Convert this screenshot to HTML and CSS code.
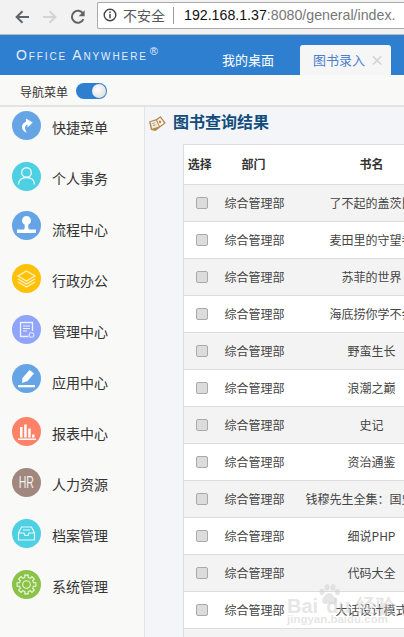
FILE: index.html
```html
<!DOCTYPE html>
<html lang="zh">
<head>
<meta charset="utf-8">
<title>Office Anywhere</title>
<link rel="stylesheet" href="styles.css">
</head>
<body>
<div class="browser">
  <svg class="nav-icon back" viewBox="0 0 16 16"><path d="M15 8H3M8.500 2.200 2.600 8l5.900 5.800" fill="none" stroke="#5f6368" stroke-width="2"/></svg>
  <svg class="nav-icon forward" viewBox="0 0 16 16"><path d="M1 8H13M7.500 2.200 13.400 8l-5.900 5.800" fill="none" stroke="#d4d4d4" stroke-width="2"/></svg>
  <svg class="nav-icon reload" viewBox="0 0 16 16"><path d="M13.400 10.200A6 6 0 1 1 13 4.600" fill="none" stroke="#5f6368" stroke-width="2"/><path d="M14.600 1.200v6h-6z" fill="#5f6368"/></svg>
  <div class="address">
    <svg class="info" viewBox="0 0 14 14"><circle cx="7" cy="7" r="5.800" fill="none" stroke="#444" stroke-width="1.400"/><path d="M7 6v4.200M7 3.500v1.400" stroke="#444" stroke-width="1.500"/></svg>
    <span class="insecure">不安全</span>
    <span class="sep"></span>
    <span class="url"><b>192.168.1.37</b>:8080/general/index.</span>
  </div>
</div>
<header class="topbar">
  <div class="brand">Office Anywhere<sup>®</sup></div>
  <div class="tab">我的桌面</div>
  <div class="tab active">图书录入<span class="close">×</span></div>
</header>
<div class="toolbar">
  <span>导航菜单</span>
  <span class="switch"><span class="knob"></span></span>
</div>
<div class="body">
  <nav class="sidebar">
    <div class="item"><span class="ic c-blue"><svg viewBox="0 0 29 29"><path d="M14 7.500 20.800 11.500 15.500 16.500V13.500C13 14.200 12 17 14.800 21.800 10 20.300 7.200 14 14 10.800z" fill="#fff"/></svg></span>快捷菜单</div>
    <div class="item"><span class="ic c-cyan"><svg viewBox="0 0 29 29"><circle cx="14.500" cy="10.500" r="4.800" fill="none" stroke="#e6f8fb" stroke-width="1.400"/><path d="M6.500 22.500c0-4.500 3.500-7 8-7s8 2.500 8 7" fill="none" stroke="#e6f8fb" stroke-width="1.400"/></svg></span>个人事务</div>
    <div class="item"><span class="ic c-blue up3"><svg viewBox="0 0 29 29"><path d="M14.500 5a4.500 4.500 0 0 1 2 8.500c-.400 1.500-.300 3 .300 5h7.200V22H5v-3.500h7.200c.600-2 .700-3.500.300-5a4.500 4.500 0 0 1 2-8.500z" fill="#fff"/></svg></span>流程中心</div>
    <div class="item"><span class="ic c-yellow"><svg viewBox="0 0 29 29"><path d="M14.500 7 23 12l-8.500 5L6 12z" fill="none" stroke="#fff3c8" stroke-width="1.300"/><path d="m6 15 8.500 5 8.500-5M6 18l8.500 5 8.500-5" fill="none" stroke="#fff3c8" stroke-width="1.300"/></svg></span>行政办公</div>
    <div class="item"><span class="ic c-violet"><svg viewBox="0 0 29 29"><path d="M20.500 16V7.500H8.500v14h8" fill="none" stroke="#eef0ff" stroke-width="1.300"/><path d="M11 11h7M11 13.500h7M11 16h4" stroke="#eef0ff" stroke-width="1.200"/><circle cx="19.500" cy="20" r="2.300" fill="none" stroke="#d5dbff" stroke-width="1.300"/></svg></span>管理中心</div>
    <div class="item"><span class="ic c-blue up3"><svg viewBox="0 0 29 29"><path d="m17.500 6 4.500 3.500-6.500 7.500-5.500 2 .5-5z" fill="#fff"/><path d="M6 21h17v2.300H6z" fill="#fff"/></svg></span>应用中心</div>
    <div class="item"><span class="ic c-coral"><svg viewBox="0 0 29 29"><path d="M8 10h2.500v10.500H8zM12.200 7.500h2.500v13h-2.500zM16.200 11.500h2.500v9h-2.500zM20 17.500h2.500v3H20zM6 21.500h18V23H6z" fill="#fff"/></svg></span>报表中心</div>
    <div class="item"><span class="ic c-brown"><span class="hr">HR</span></span>人力资源</div>
    <div class="item"><span class="ic c-cyan"><svg viewBox="0 0 29 29"><path d="M9.500 8h10l3 6v7H6.500v-7zM6.500 14h5.500l1 2.500h3l1-2.500h5.500M11 11h7" fill="none" stroke="#e6f8fb" stroke-width="1.200"/></svg></span>档案管理</div>
    <div class="item"><span class="ic c-green"><svg viewBox="0 0 29 29"><g transform="translate(14.500 14.500)" fill="none" stroke="#eef8dc" stroke-width="1.100"><circle r="3.800"/><polygon points="-1.700,-7 -1.700,-9.400 1.700,-9.400 1.700,-7 3.750,-6.150 5.440,-7.850 7.850,-5.440 6.150,-3.750 7,-1.700 9.400,-1.700 9.400,1.700 7,1.700 6.150,3.750 7.850,5.440 5.440,7.850 3.750,6.150 1.700,7 1.700,9.400 -1.700,9.400 -1.700,7 -3.750,6.150 -5.440,7.850 -7.850,5.440 -6.150,3.750 -7,1.700 -9.400,1.700 -9.400,-1.700 -7,-1.700 -6.150,-3.750 -7.850,-5.440 -5.440,-7.850 -3.750,-6.150"/></g></svg></span>系统管理</div>
  </nav>
  <main class="main">
    <h1 class="title">
      <svg class="book" viewBox="0 0 18 17"><path d="M1 6.500 8.500 4 12.500 1 17.800 8 7.500 16 3 15z" fill="#b08a4a"/><path d="M2.500 7 8 5.500 11 11.500 4.200 13.800z" fill="#f3e9d6"/><path d="M9.200 5.200 12.200 2.800 16 8 11.800 11z" fill="#fdf9f2"/><path d="M11.800 5.200 13.300 6.800 12.300 8.500 10.800 7z" fill="#d8524a"/><path d="M4.500 8.500l2-.5M5 10.500l2.500-.7" stroke="#9a9a9a" stroke-width="1"/></svg>
      图书查询结果
    </h1>
    <div class="table-wrap">
      <table class="books">
        <colgroup><col class="c1"><col class="c2"><col class="c3"><col class="c4"></colgroup>
        <thead><tr><th>选择</th><th>部门</th><th>书名</th><th></th></tr></thead>
        <tbody>
          <tr><td><span class="check"></span></td><td>综合管理部</td><td>了不起的盖茨比</td><td></td></tr>
          <tr><td><span class="check"></span></td><td>综合管理部</td><td>麦田里的守望者</td><td></td></tr>
          <tr><td><span class="check"></span></td><td>综合管理部</td><td>苏菲的世界</td><td></td></tr>
          <tr><td><span class="check"></span></td><td>综合管理部</td><td>海底捞你学不会</td><td></td></tr>
          <tr><td><span class="check"></span></td><td>综合管理部</td><td>野蛮生长</td><td></td></tr>
          <tr><td><span class="check"></span></td><td>综合管理部</td><td>浪潮之巅</td><td></td></tr>
          <tr><td><span class="check"></span></td><td>综合管理部</td><td>史记</td><td></td></tr>
          <tr><td><span class="check"></span></td><td>综合管理部</td><td>资治通鉴</td><td></td></tr>
          <tr><td><span class="check"></span></td><td>综合管理部</td><td>钱穆先生全集：国史大纲</td><td></td></tr>
          <tr><td><span class="check"></span></td><td>综合管理部</td><td>细说PHP</td><td></td></tr>
          <tr><td><span class="check"></span></td><td>综合管理部</td><td>代码大全</td><td></td></tr>
          <tr><td><span class="check"></span></td><td>综合管理部</td><td>大话设计模式</td><td></td></tr>
          <tr><td></td><td></td><td></td><td></td></tr>
        </tbody>
      </table>
    </div>
  </main>
</div>
<div class="watermark">
  <svg class="paw" viewBox="0 0 24 22"><ellipse cx="5" cy="8" rx="2.500" ry="3.200"/><ellipse cx="10" cy="3.500" rx="2.500" ry="3.200"/><ellipse cx="16" cy="3.500" rx="2.500" ry="3.200"/><ellipse cx="20.500" cy="8" rx="2.500" ry="3.200"/><path d="M12.500 9c3 0 3.500 3 6 5s1 6-2 6-2.500-1-4-1-2 1-4.500 1-4-3.500-2-6 3.500-5 6.500-5z"/></svg>
  <div class="wm-main">Bai<span class="wm-gap"></span>du 经验</div>
  <div class="wm-sub">jingyan.baidu.com</div>
</div>
</body>
</html>
```

FILE: styles.css
```css
* { box-sizing: border-box; }
html, body { margin: 0; height: 100%; }
body {
  width: 404px;
  height: 637px;
  overflow: hidden;
  position: relative;
  display: flex;
  flex-direction: column;
  font-family: "Noto Sans CJK SC", "Liberation Sans", sans-serif;
  color: #333;
  background: #f9f9f7;
}

/* browser chrome */
.browser {
  flex: 0 0 35px;
  display: flex;
  align-items: center;
  background: #f2f2f2;
  border-bottom: 1px solid #b8b8b8;
  padding-left: 14px;
}
.nav-icon { width: 16px; height: 16px; flex: none; margin-top: -1px; }
.forward { margin-left: 12px; }
.reload { margin-left: 12px; }
.address {
  margin-left: 11px;
  flex: 1;
  height: 27px;
  margin-top: -4px;
  margin-right: -4px;
  display: flex;
  align-items: center;
  background: #fff;
  border: 1px solid #a9a9a9;
  border-right: 0;
  border-radius: 2px 0 0 2px;
  padding-left: 5px;
  white-space: nowrap;
  overflow: hidden;
}
.info { width: 14px; height: 14px; flex: none; }
.insecure { margin-left: 6px; font-size: 14px; color: #555; }
.sep { width: 1px; height: 17px; background: #999; margin: 0 10px 0 8px; flex: none; }
.url { font-family: "Liberation Sans", sans-serif; font-size: 14.200px; color: #777; }
.url b { font-weight: 400; color: #111; }

/* app header */
.topbar {
  flex: 0 0 40px;
  display: flex;
  align-items: flex-end;
  background: #2f7fd0;
  color: #fff;
  position: relative;
}
.brand {
  width: 222px;
  align-self: flex-start;
  padding: 12px 0 0 16px;
  font-family: "Liberation Sans", sans-serif;
  font-variant: small-caps;
  font-size: 14px;
  letter-spacing: 1.900px;
  color: #e4eefa;
  white-space: nowrap;
}
.brand sup { font-size: 11px; line-height: 0; vertical-align: 5px; margin-left: 2px; }
.tab {
  height: 30px;
  font-size: 13px;
  line-height: 30px;
}
.tab.active {
  margin-left: 26px;
  width: 91px;
  padding-left: 13px;
  background: #f6f6f6;
  color: #4c80cf;
  border-radius: 3px 3px 0 0;
  position: relative;
}
.close { position: absolute; right: 7px; top: 0; color: #d4d4d4; font-size: 14px; font-weight: 700; line-height: 28px; }

/* toolbar */
.toolbar {
  flex: 0 0 32px;
  display: flex;
  align-items: center;
  padding-top: 2px;
  padding-left: 20px;
  font-size: 12px;
  background: #f9f9f7;
  border-bottom: 2px solid #e3e3e3;
}
.switch {
  margin-left: 8px;
  width: 31px;
  height: 16px;
  border-radius: 8px;
  background: #2f7fd0;
  display: flex;
  justify-content: flex-end;
  align-items: center;
  padding-right: 1px;
}
.knob {
  width: 14px;
  height: 14px;
  border-radius: 50%;
  background: radial-gradient(circle at 40% 40%, #fff, #d5d5d5);
}

/* layout */
.body { flex: 1; display: flex; min-height: 0; }
.sidebar {
  flex: 0 0 145px;
  background: #f9f9f7;
  border-right: 1px solid #e3e3e3;
}
.item {
  height: 51px;
  display: flex;
  align-items: center;
  padding: 0 0 12px 12px;
  font-size: 14px;
  color: #333;
}
.ic {
  flex: none;
  width: 29px;
  height: 29px;
  border-radius: 50%;
  margin: 0 11px 2px 0;
  display: flex;
  align-items: center;
  justify-content: center;
}
.ic svg { width: 29px; height: 29px; display: block; }
.ic.up3 { margin-bottom: 6px; }
.c-blue { background: #65a5e6; }
.c-cyan { background: #4dd0e1; }
.c-yellow { background: #ffc107; }
.c-violet { background: #90a4fb; }
.c-coral { background: #ff8268; }
.c-brown { background: #a1887f; }
.c-green { background: #8bc34a; }
.hr {
  display: inline-block;
  color: #f6f0ed;
  font-family: "Liberation Sans", sans-serif;
  font-size: 17px;
  transform: scaleX(.62);
}

/* main */
.main { flex: 1; min-width: 0; background: #f3f5f8; overflow: hidden; }
.title {
  margin: 0;
  height: 37px;
  padding: 0 0 10px 3px;
  display: flex;
  align-items: center;
  gap: 7px;
  font-size: 16px;
  font-weight: 700;
  color: #124d7e;
  white-space: nowrap;
}
.book { width: 18px; height: 17px; flex: none; margin-top: 5px; }
.table-wrap { margin-left: 38px; overflow: hidden; }
.books {
  table-layout: fixed;
  width: 320px;
  border-collapse: collapse;
  background: #fff;
  font-size: 12px;
  color: #444;
  border-top: 1px solid #ddd;
  border-left: 1px solid #ddd;
}
.c1 { width: 34px; }
.c2 { width: 72px; }
.c3 { width: 164px; }
.c4 { width: 50px; }
.books th {
  height: 40px;
  font-weight: 700;
  font-size: 12px;
  color: #333;
  padding: 0 0 2px;
  text-align: center;
  border-bottom: 1px solid #ddd;
}
.books th:first-child { padding-right: 2px; }
.books td {
  height: 37px;
  padding: 0 0 1px;
  text-align: center;
  white-space: nowrap;
  border-bottom: 1px solid #ddd;
}
.books td:nth-child(2) { padding-left: 2px; }
.books tbody tr:nth-child(odd) { background: #f3f3f3; }
.check {
  display: block;
  width: 12px;
  height: 12px;
  margin: 1px 0 0 12px;
  border-radius: 2px;
  background: #dcdcdc;
  border: 1px solid #aaa;
}

/* watermark */
.watermark {
  position: absolute;
  left: 287px;
  top: 584px;
  width: 95px;
  height: 53px;
  color: rgba(205, 205, 205, .5);
  pointer-events: none;
  white-space: nowrap;
}
.paw { position: absolute; left: 30px; top: 0; width: 24px; height: 22px; fill: rgba(205, 205, 205, .5); }
.wm-main { position: absolute; left: 0; top: 9px; font-family: "Liberation Sans", sans-serif; font-size: 20px; font-weight: 700; }
.wm-gap { display: inline-block; width: 8px; }
.wm-sub { position: absolute; left: 0; top: 29px; font-family: "Liberation Sans", sans-serif; font-size: 11.500px; font-weight: 700; }
```
